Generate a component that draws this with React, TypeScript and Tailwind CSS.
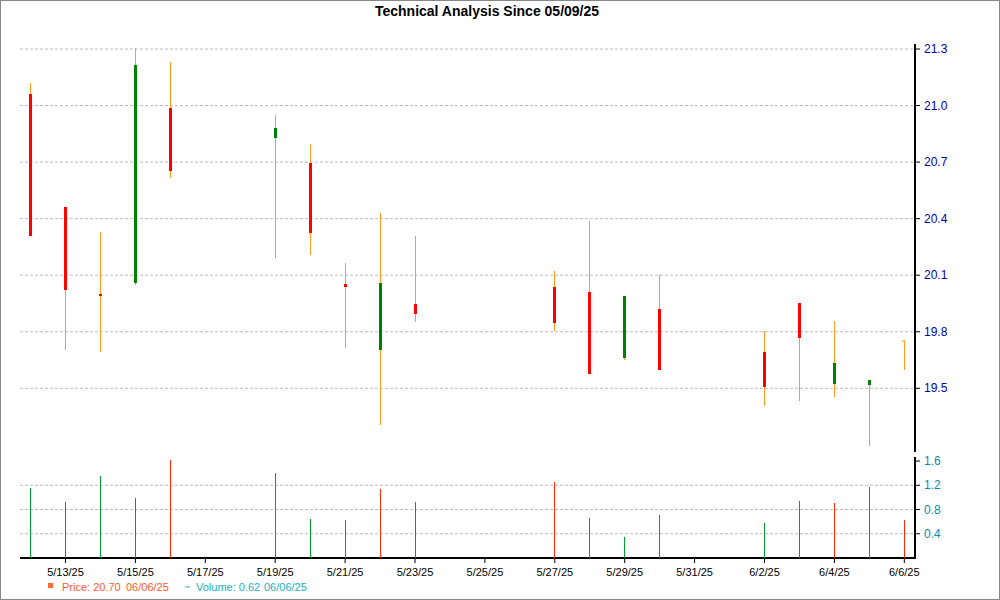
const py = (p: number) => 49 + (21.3 - p) * 188.5;
const vy = (v: number) => 558 - v * 60.6;

type C = { x: number; hi: number; lo: number; bt: number; bb: number; c: 'r' | 'g' | 'o' };
const candles: C[] = [
  { x: 30, hi: 83, lo: 236, bt: 94, bb: 236, c: 'r' },
  { x: 65, hi: 207, lo: 350, bt: 207, bb: 290, c: 'r' },
  { x: 100, hi: 232, lo: 352, bt: 294, bb: 295, c: 'r' },
  { x: 135, hi: 48, lo: 285, bt: 65, bb: 283, c: 'g' },
  { x: 170, hi: 62, lo: 178, bt: 108, bb: 171, c: 'r' },
  { x: 275, hi: 115, lo: 258, bt: 128, bb: 138, c: 'g' },
  { x: 310, hi: 144, lo: 255, bt: 163, bb: 233, c: 'r' },
  { x: 345, hi: 263, lo: 348, bt: 284, bb: 287, c: 'r' },
  { x: 380, hi: 213, lo: 425, bt: 283, bb: 350, c: 'g' },
  { x: 415, hi: 236, lo: 322, bt: 304, bb: 314, c: 'r' },
  { x: 554, hi: 271, lo: 331, bt: 287, bb: 323, c: 'r' },
  { x: 589, hi: 221, lo: 374, bt: 292, bb: 374, c: 'r' },
  { x: 624, hi: 296, lo: 360, bt: 296, bb: 358, c: 'g' },
  { x: 659, hi: 275, lo: 370, bt: 309, bb: 370, c: 'r' },
  { x: 764, hi: 331, lo: 406, bt: 352, bb: 387, c: 'r' },
  { x: 799, hi: 303, lo: 401, bt: 303, bb: 338, c: 'r' },
  { x: 834, hi: 321, lo: 397, bt: 363, bb: 384, c: 'g' },
  { x: 869, hi: 380, lo: 446, bt: 380, bb: 385, c: 'g' },
  { x: 904, hi: 341, lo: 370, bt: 341, bb: 342, c: 'o' },
];
const vols: [number, number, 'r' | 'g'][] = [
  [30, 488, 'g'], [65, 502, 'g'], [100, 476, 'g'], [135, 498, 'g'], [170, 460, 'r'],
  [275, 473, 'r'], [310, 519, 'g'], [345, 520, 'r'], [380, 489, 'r'], [415, 502, 'g'],
  [554, 482, 'r'], [589, 518, 'r'], [624, 537, 'g'], [659, 515, 'r'], [764, 523, 'g'],
  [799, 501, 'r'], [834, 503, 'r'], [869, 487, 'r'], [904, 520, 'r'],
];
const dates = ['5/13/25', '5/15/25', '5/17/25', '5/19/25', '5/21/25', '5/23/25', '5/25/25', '5/27/25', '5/29/25', '5/31/25', '6/2/25', '6/4/25', '6/6/25'];
const priceTicks = [21.3, 21.0, 20.7, 20.4, 20.1, 19.8, 19.5];
const volTicks = [1.6, 1.2, 0.8, 0.4];
const col = { r: '#ff0000', g: '#008000', o: '#ff8c00' };

export default function App() {
  return (
    <div className="w-[1000px] h-[600px] bg-white" style={{ fontFamily: '"Liberation Sans", Arial, sans-serif' }}>
      <svg width="1000" height="600" className="block">
        <rect x="0.5" y="0.5" width="999" height="599" fill="white" stroke="#888" />
        <text x="487" y="16" textAnchor="middle" fontSize="14" fontWeight="bold" fill="#000">Technical Analysis Since 05/09/25</text>
        {priceTicks.map(t => (
          <g key={t}>
            <line x1="20" x2="915" y1={py(t)} y2={py(t)} stroke="#bbb" strokeDasharray="3 2" />
            <line x1="915" x2="920" y1={py(t)} y2={py(t)} stroke="#000" />
            <text x="924" y={py(t) + 4} fontSize="12" fill="#0000b0">{t.toFixed(1)}</text>
          </g>
        ))}
        {volTicks.map(t => (
          <g key={t}>
            {t < 1.6 && <line x1="20" x2="915" y1={vy(t)} y2={vy(t)} stroke="#bbb" strokeDasharray="3 2" />}
            <line x1="915" x2="920" y1={vy(t)} y2={vy(t)} stroke="#000" />
            <text x="924" y={vy(t) + 4} fontSize="12" fill="#0090b0">{t.toFixed(1)}</text>
          </g>
        ))}
        <line x1="915" x2="915" y1="44" y2="452" stroke="#000" strokeWidth="2" />
        <line x1="915" x2="915" y1="457" y2="558" stroke="#000" strokeWidth="2" />
        <line x1="20" x2="916" y1="558" y2="558" stroke="#000" strokeWidth="2" />
        {candles.map(c => (
          <g key={c.x}>
            <line x1={c.x + 0.5} x2={c.x + 0.5} y1={c.hi} y2={c.lo} stroke="#ff9a1a" />
            {c.c === 'o' ? (
              <line x1={c.x - 2} x2={c.x + 1} y1={c.bt} y2={c.bt} stroke="#ff8c00" />
            ) : (
              <rect x={c.x - 1} y={c.bt} width="3" height={Math.max(2, c.bb - c.bt)} fill={col[c.c]} />
            )}
          </g>
        ))}
        {vols.map(([x, y, c]) => (
          <line key={x} x1={x + 0.5} x2={x + 0.5} y1={y} y2="558" stroke={c === 'r' ? '#ff2a00' : '#00a030'} />
        ))}
        {dates.map((d, i) => (
          <g key={d}>
            <line x1={65.5 + i * 69.9} x2={65.5 + i * 69.9} y1="558" y2="563" stroke="#000" />
            <text x={65.5 + i * 69.9} y="576" textAnchor="middle" fontSize="11" fill="#000">{d}</text>
          </g>
        ))}
        <rect x="48" y="583" width="5" height="5" fill="#ff6a30" />
        <text x="62" y="591" fontSize="11" fill="#ff5a2a">Price: 20.70</text>
        <text x="126" y="591" fontSize="11" fill="#ff5a2a">06/06/25</text>
        <line x1="185" x2="190" y1="587" y2="587" stroke="#20b0c0" />
        <text x="196" y="591" fontSize="11" fill="#20b0c0">Volume: 0.62</text>
        <text x="264" y="591" fontSize="11" fill="#20b0c0">06/06/25</text>
      </svg>
    </div>
  );
}
